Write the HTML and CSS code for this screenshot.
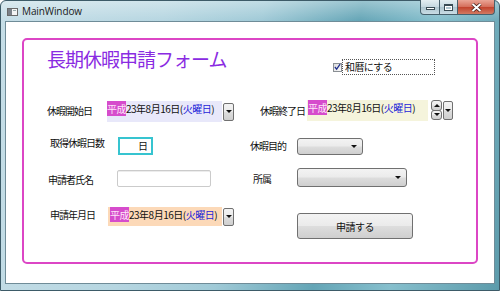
FILE: index.html
```html
<!DOCTYPE html>
<html lang="ja">
<head>
<meta charset="utf-8">
<title>MainWindow</title>
<link rel="stylesheet" href="styles.css">
</head>
<body>
<div class="window">
  <div class="titlebar">
    <svg class="appicon" width="11" height="8" viewBox="0 0 11 8">
      <rect x="0.5" y="0.5" width="10" height="7" fill="#f4f4f4" stroke="#6a6a6a"/>
      <rect x="1" y="1" width="4" height="6" fill="#7a8088"/>
      <rect x="6" y="2" width="3" height="1" fill="#9aa"/>
    </svg>
    <span class="wtitle">MainWindow</span>
    <div class="controls">
      <div class="cbtn min"><span class="minbar"></span></div>
      <div class="cbtn max"><span class="maxbox"></span></div>
      <div class="cbtn close">
        <svg width="11" height="9" viewBox="0 0 11 9"><path d="M1.5 1 L9.5 8 M9.5 1 L1.5 8" stroke="#3a1a14" stroke-width="3.4"/><path d="M1.5 1 L9.5 8 M9.5 1 L1.5 8" stroke="#fff" stroke-width="2"/></svg>
      </div>
    </div>
  </div>
  <div class="client">
    <div class="panel">
      <div class="header">
        <h1 class="title">長期休暇申請フォーム</h1>
        <label class="chk">
          <span class="cbox"><svg width="8" height="8" viewBox="0 0 8 8"><path d="M1 4 L3 6.5 L7 0.8" fill="none" stroke="#1e2e8c" stroke-width="1.4"/></svg></span>
          <span class="ctext">和暦にする</span>
        </label>
      </div>

      <div class="row row1">
        <div class="lcell">
          <span class="lbl l1">休暇開始日</span>
          <div class="picker">
            <div class="pfield lavender f1"><span class="era">平成</span>23年8月16日(<span class="dow">火曜日</span>)</div>
            <div class="dbtn"><i class="tri"></i></div>
          </div>
        </div>
        <div class="rcell">
          <span class="lbl r1">休暇終了日</span>
          <div class="picker">
            <div class="pfield beige f2"><span class="era">平成</span>23年8月16日(<span class="dow">火曜日</span>)</div>
            <div class="spin">
              <div class="shalf"><i class="tri up"></i></div>
              <div class="shalf"><i class="tri"></i></div>
            </div>
            <div class="dbtn d2"><i class="tri"></i></div>
          </div>
        </div>
      </div>

      <div class="row row2">
        <div class="lcell">
          <span class="lbl l2">取得休暇日数</span>
          <div class="numbox">日</div>
        </div>
        <div class="rcell">
          <span class="lbl r2">休暇目的</span>
          <div class="combo c1"><i class="tri"></i></div>
        </div>
      </div>

      <div class="row row3">
        <div class="lcell">
          <span class="lbl l3">申請者氏名</span>
          <div class="textbox"></div>
        </div>
        <div class="rcell">
          <span class="lbl r3">所属</span>
          <div class="combo c2"><i class="tri"></i></div>
        </div>
      </div>

      <div class="row row4">
        <div class="lcell">
          <span class="lbl l4">申請年月日</span>
          <div class="picker">
            <div class="pfield peach f3"><span class="era">平成</span>23年8月16日(<span class="dow">火曜日</span>)</div>
            <div class="dbtn d3"><i class="tri"></i></div>
          </div>
        </div>
        <div class="rcell">
          <button class="submit" type="button">申請する</button>
        </div>
      </div>
    </div>
  </div>
</div>
</body>
</html>
```

FILE: styles.css
```css
* { box-sizing: border-box; margin: 0; padding: 0; }
html, body { width: 500px; height: 291px; overflow: hidden; background: #fff; }
body { font-family: "Noto Sans CJK JP", "Noto Sans", sans-serif; color: #111; }

.window {
  width: 500px; height: 291px;
  display: flex; flex-direction: column;
  border: 1px solid #3d5b68;
  border-radius: 6px 6px 0 0;
  background:
    linear-gradient(180deg, rgba(255,255,255,0.35) 0px, rgba(255,255,255,0) 20px),
    linear-gradient(100deg, #c6dee7 0%, #b6d6e1 30%, #a0cad7 48%, #64a5b6 66%, #86bfcd 80%, #5c9bab 100%);
}

.titlebar {
  height: 20px; flex: none;
  display: flex; align-items: center;
  padding-left: 6px; padding-right: 4px;
}
.appicon { flex: none; margin-top: 1px; }
.wtitle {
  margin-left: 4px;
  font-family: "Open Sans", "Noto Sans", sans-serif;
  font-size: 10px; color: #1a1a1a; letter-spacing: -0.1px;
}
.controls {
  margin-left: auto; align-self: flex-start; margin-top: -1px;
  display: flex; height: 15px;
}
.cbtn {
  height: 15px; display: flex; align-items: center; justify-content: center;
  border: 1px solid #47606c; border-top: none;
  background: linear-gradient(180deg, #e4eef2 0%, #c5d8e0 50%, #aec5cf 52%, #cadde5 100%);
}
.min { width: 20px; border-radius: 0 0 0 4px; }
.max { width: 18px; border-left: none; }
.close {
  width: 37px; border-left: none; border-radius: 0 0 4px 0;
  background: linear-gradient(180deg, #eaa596 0%, #d56f5c 48%, #c2432d 52%, #d27a62 100%);
}
.minbar { width: 9px; height: 3px; margin-top: 3px; background: #fff; border: 1px solid #3a4c55; }
.maxbox { width: 9px; height: 7px; background: transparent; border: 1px solid #3a4c55; box-shadow: inset 0 0 0 1px #fff; border-top-width: 2px; }

.client {
  flex: 1;
  margin: 0 4px 6px 4px;
  background: #fff;
  border: 1px solid #6f8c98;
  padding: 16px 0 0 16px;
}

.panel {
  width: 456px; height: 226px;
  border: 2px solid #dc46c5;
  border-radius: 5px;
  padding-left: 23px;
  display: flex; flex-direction: column;
}

.header {
  height: 59px; flex: none;
  display: grid; grid-template-columns: 286px auto; align-items: start;
}
.title {
  padding-top: 8px;
  font-size: 19px; line-height: 22px; font-weight: normal;
  letter-spacing: -1px;
  color: #8a2be2;
  white-space: nowrap;
}
.chk { display: flex; align-items: center; margin-top: 19px; height: 16px; }
.cbox {
  width: 9px; height: 9px; flex: none;
  border: 1px solid #8a8f94;
  background: linear-gradient(135deg, #dcdcdc, #fafafa);
  display: flex; align-items: center; justify-content: center;
}
.ctext {
  margin-left: 0px;
  width: 93px; height: 16px;
  border: 1px dotted #555;
  padding-left: 2px;
  font-size: 10px; line-height: 14px; letter-spacing: -0.6px;
}

.row { display: flex; flex: none; align-items: center; }
.row1 { height: 25px; }
.row2 { height: 18px; margin-top: 13px; }
.row3 { height: 20px; margin-top: 13px; }
.row4 { height: 32px; margin-top: 19px; align-items: flex-start; }

.lcell { width: 203px; display: flex; align-items: center; flex: none; }
.rcell { display: flex; align-items: center; }
.row4 .lcell, .row4 .rcell { align-items: flex-start; }

.lbl {
  font-size: 10px; line-height: 14px; letter-spacing: -1px;
  white-space: nowrap; flex: none;
}
.l1 { width: 60px; margin-top: -1px; }
.l2 { width: 71px; padding-left: 3px; margin-bottom: 7px; }
.l3 { width: 70px; padding-left: 1px; margin-top: 3px; }
.l4 { width: 61px; padding-left: 3px; margin-top: 1px; }
.r1 { width: 57px; padding-left: 10px; margin-top: -2px; }
.r2 { width: 47px; margin-bottom: 1px; }
.r3 { width: 47px; padding-left: 3px; margin-top: 2px; }

.picker { display: flex; align-items: center; }
.pfield {
  height: 21px;
  padding: 2px 0 0 0;
  font-size: 10px; line-height: 11px; letter-spacing: -0.5px;
  white-space: nowrap; overflow: hidden;
}
.f1 { width: 115px; }
.f2 { width: 121px; padding-left: 1px; margin-top: -2px; }
.f3 { width: 114px; height: 19px; padding-left: 2px; }
.lavender { background: #e8e8fa; }
.beige { background: #f5f4dc; }
.peach { background: #fcd9b8; }
.era { background: #d64ccc; color: #fde6f8; }
.dow { color: #1e24d8; }

.dbtn, .combo, .submit, .shalf {
  border: 1px solid #707070;
  border-radius: 2px;
  background: linear-gradient(180deg, #f3f3f3 0%, #ebebeb 48%, #dddddd 52%, #cfcfcf 100%);
}
.dbtn {
  width: 11px; height: 18px; margin-left: 1px;
  display: flex; align-items: center; justify-content: center;
}
.d2 { width: 10px; height: 19px; margin-left: 1px; margin-top: -2px; }
.d3 { margin-top: 0; }

.spin {
  width: 11px; height: 20px; margin-left: 3px; margin-top: -3px;
  display: flex; flex-direction: column;
}
.shalf {
  flex: 1; display: flex; align-items: center; justify-content: center;
  border-radius: 3px;
}
.shalf + .shalf { margin-top: -1px; }

.tri {
  display: block; width: 0; height: 0;
  border-left: 3px solid transparent;
  border-right: 3px solid transparent;
  border-top: 3px solid #111;
}
.tri.up { border-top: none; border-bottom: 3px solid #111; }

.numbox {
  width: 35px; height: 18px; margin-left: 0;
  border: 2px solid #36c4d0;
  font-size: 10px; line-height: 14px;
  text-align: right; padding-right: 3px;
}

.textbox {
  width: 94px; height: 17px;
  border: 1px solid #cbcbcb; border-radius: 2px;
  box-shadow: inset 0 1px 0 #ececec;
}

.combo {
  display: flex; align-items: center; justify-content: flex-end;
  padding-right: 5px; border-radius: 3px;
}
.c1 { width: 66px; height: 17px; }
.c2 { width: 110px; height: 19px; margin-top: -2px; }

.submit {
  margin-left: 47px; margin-top: 6px;
  width: 116px; height: 26px;
  border-radius: 3px;
  font-family: "Noto Sans CJK JP", "Noto Sans", sans-serif;
  font-size: 10px; letter-spacing: -0.5px; color: #111;
}
```
